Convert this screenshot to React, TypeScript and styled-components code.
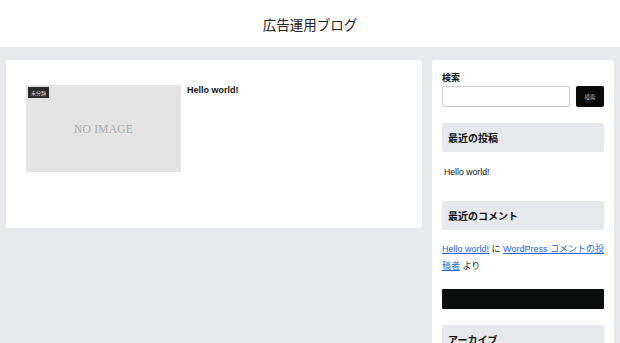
import styled, { createGlobalStyle } from "styled-components";

const GlobalStyle = createGlobalStyle`
  * { box-sizing: border-box; }
  body {
    margin: 0;
    background: #e7e8ec;
    font-family: "Liberation Sans", "Noto Sans CJK JP", sans-serif;
    color: #111;
  }
`;

const Header = styled.header`
  height: 47px;
  background: #fff;
  display: flex;
  align-items: center;
  justify-content: center;
`;

const SiteTitle = styled.h1`
  margin: 0;
  font-size: 13.5px;
  font-weight: 400;
  color: #222;
  font-family: "Noto Sans CJK JP", sans-serif;
`;

const Body = styled.div`
  display: flex;
  align-items: flex-start;
  gap: 10px;
  padding: 13px 6px 0;
`;

const MainCard = styled.main`
  width: 416px;
  height: 168px;
  background: #fff;
  border-radius: 3px;
  padding: 25px 20px;
`;

const Entry = styled.article`
  display: flex;
  gap: 6px;
`;

const Thumb = styled.div`
  position: relative;
  width: 155px;
  height: 87px;
  background: #e3e3e3;
  display: flex;
  align-items: center;
  justify-content: center;
`;

const NoImage = styled.span`
  font-family: "Liberation Serif", serif;
  font-size: 11.5px;
  color: #a9a9a9;
  letter-spacing: 0.2px;
`;

const CatLabel = styled.span`
  position: absolute;
  top: 2px;
  left: 2px;
  background: #2b2b2b;
  color: #ddd;
  font-size: 5px;
  padding: 2px 3px;
  line-height: 7px;
  font-family: "Noto Sans CJK JP", sans-serif;
`;

const EntryTitle = styled.h2`
  margin: 0;
  font-size: 9px;
  font-weight: 700;
  line-height: 11px;
  padding-top: 0;
`;

const Sidebar = styled.aside`
  width: 182px;
  background: #fff;
  border-radius: 3px;
  padding: 11px 10px 20px;
  min-height: 300px;
`;

const Label = styled.div`
  font-size: 9px;
  line-height: 13px;
  font-weight: 700;
  margin-bottom: 2px;
  font-family: "Noto Sans CJK JP", sans-serif;
`;

const SearchRow = styled.div`
  display: flex;
  gap: 6px;
`;

const SearchInput = styled.div`
  flex: 1;
  height: 21px;
  border: 1px solid #cfcfcf;
  border-radius: 2px;
  background: #fff;
`;

const SearchButton = styled.div`
  width: 28px;
  height: 21px;
  background: #0a0a0a;
  border-radius: 2px;
  color: #bbb;
  font-size: 5.5px;
  display: flex;
  align-items: center;
  justify-content: center;
  font-family: "Noto Sans CJK JP", sans-serif;
`;

const WidgetTitle = styled.h3<{ $top: number }>`
  margin: ${(p) => p.$top}px 0 0;
  height: 29px;
  background: #e7e8eb;
  border-radius: 2px;
  padding: 0 6px;
  display: flex;
  align-items: center;
  font-size: 10px;
  font-weight: 700;
  font-family: "Noto Sans CJK JP", sans-serif;
`;

const PostLink = styled.div`
  margin: 14px 0 0 2px;
  font-size: 8.7px;
  line-height: 12px;
  color: #111;
`;

const Comment = styled.div`
  margin-top: 11px;
  font-size: 9px;
  line-height: 17px;
  color: #222;
  font-family: "Liberation Sans", "Noto Sans CJK JP", sans-serif;
`;

const Link = styled.a`
  color: #1d64d8;
  text-decoration: underline;
`;

const BlackBar = styled.div`
  margin-top: 14px;
  height: 20px;
  background: #0d0e0e;
  border-radius: 1px;
`;

export default function App() {
  return (
    <>
      <GlobalStyle />
      <Header>
        <SiteTitle>広告運用ブログ</SiteTitle>
      </Header>
      <Body>
        <MainCard>
          <Entry>
            <Thumb>
              <CatLabel>未分類</CatLabel>
              <NoImage>NO IMAGE</NoImage>
            </Thumb>
            <EntryTitle>Hello world!</EntryTitle>
          </Entry>
        </MainCard>
        <Sidebar>
          <Label>検索</Label>
          <SearchRow>
            <SearchInput />
            <SearchButton>検索</SearchButton>
          </SearchRow>
          <WidgetTitle $top={16}>最近の投稿</WidgetTitle>
          <PostLink>Hello world!</PostLink>
          <WidgetTitle $top={23}>最近のコメント</WidgetTitle>
          <Comment>
            <Link>Hello world!</Link> に <Link>WordPress コメントの投稿者</Link> より
          </Comment>
          <BlackBar />
          <WidgetTitle $top={16}>アーカイブ</WidgetTitle>
        </Sidebar>
      </Body>
    </>
  );
}
